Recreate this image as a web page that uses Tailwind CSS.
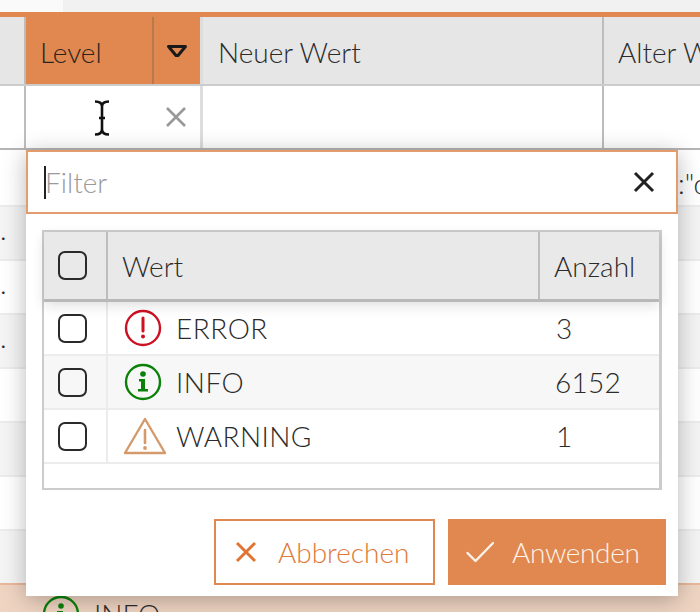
<!DOCTYPE html>
<html lang="de">
<head>
    <meta charset="UTF-8">
    <title>Filter</title>
    <script src="https://cdn.jsdelivr.net/npm/@tailwindcss/browser@4"></script>
</head>
<body class="w-[700px] h-[612px] overflow-hidden relative bg-white font-['Lato','Liberation_Sans',sans-serif] font-light text-[#2b2b2b] text-[28px]">
    <!-- Top strip -->
    <div class="h-3 flex">
        <div class="w-[63px] bg-[#fafafa]"></div>
        <div class="flex-1 bg-[#f1f1f1]"></div>
    </div>
    <div class="h-[5px] bg-[#e0884f]"></div>

    <!-- Table header -->
    <div class="flex h-[69px] border-b-2 border-[#cccccc] bg-[#e6e6e6]">
        <div class="w-[26px] border-r-2 border-[#bdbdbd]"></div>
        <div class="w-[174px] flex bg-[#e0884f]">
            <div class="w-[128px] border-r-2 border-[#b8794f] pl-[14px] pt-[17px] leading-[36px] text-[#2a2420]">Level</div>
            <div class="flex-1 flex items-start justify-center pt-[27px]">
                <svg width="22" height="16" viewBox="0 0 22 16" fill="none"><path d="M2.5 2.5H19.5L12 11.5H10Z" stroke="#1a1a1a" stroke-width="3" stroke-linejoin="round"/></svg>
            </div>
        </div>
        <div class="w-[404px] border-l-[3px] border-r-2 border-l-[#dddddd] border-r-[#bdbdbd] pl-[15px] pt-[17px] leading-[36px]">Neuer Wert</div>
        <div class="flex-1 pl-[14px] pt-[17px] leading-[36px] whitespace-nowrap overflow-hidden">Alter Wert</div>
    </div>

    <!-- Filter row -->
    <div class="flex h-[64px] border-b-2 border-[#b5b5b5] bg-white">
        <div class="w-[26px] border-r-2 border-[#bdbdbd]"></div>
        <div class="w-[174px] relative flex items-center justify-end pr-[13px]">
            <svg width="22" height="22" viewBox="0 0 22 22" fill="none"><path d="M2 2L20 20M20 2L2 20" stroke="#999999" stroke-width="2.6"/></svg>
            <svg class="absolute left-[67px] top-[14px]" width="18" height="36" viewBox="0 0 18 36" fill="none"><path d="M2 1.5C6 1.5 9 3 9 6.5V29.5C9 33 6 34.5 2 34.5M16 1.5C12 1.5 9 3 9 6.5V29.5C9 33 12 34.5 16 34.5M6 18H12" stroke="#111111" stroke-width="2.6"/></svg>
        </div>
        <div class="w-[404px] border-l-[3px] border-r-2 border-l-[#dddddd] border-r-[#bdbdbd]"></div>
        <div class="flex-1"></div>
    </div>

    <!-- Rows behind the popup -->
    <div class="h-[57px] bg-white border-b-2 border-[#ececec] flex justify-end">
        <span class="pt-[15px] leading-[36px] whitespace-nowrap w-[22px] overflow-hidden">:"d</span>
    </div>
    <div class="h-[54px] bg-[#f4f4f4] border-b-2 border-[#ececec] leading-[44px]">.</div>
    <div class="h-[54px] bg-white border-b-2 border-[#ececec] leading-[44px]">.</div>
    <div class="h-[54px] bg-[#f4f4f4] border-b-2 border-[#ececec] leading-[44px]">.</div>
    <div class="h-[54px] bg-white border-b-2 border-[#ececec]"></div>
    <div class="h-[54px] bg-[#f4f4f4] border-b-2 border-[#ececec]"></div>
    <div class="h-[54px] bg-white border-b-2 border-[#ececec]"></div>
    <div class="h-[54px] bg-[#f4f4f4] border-b-2 border-[#e8b89a]"></div>
    <div class="h-[27px] bg-[#efd4c2] pl-[42px] pt-[10px] flex gap-[14px] items-start">
        <svg class="shrink-0" width="38" height="38" viewBox="0 0 38 38" fill="none"><circle cx="19" cy="19" r="17" stroke="#0a820a" stroke-width="2.4"/><circle cx="19" cy="11" r="2.8" fill="#0a820a"/><path d="M15 16H21V27H24V29H14V27H17V18H15Z" fill="#0a820a"/></svg>
        <span class="leading-[36px] pt-[1px]">INFO</span>
    </div>

    <!-- Filter popup -->
    <div class="absolute left-[26px] top-[150px] w-[652px] h-[446px] bg-white shadow-[0_4px_22px_rgba(0,0,0,0.28)] flex flex-col">
        <div class="h-[64px] border-2 border-[#e29c6e] flex items-center pl-[16px] pr-[21px]">
            <div class="w-[2px] h-[33px] bg-[#222222]"></div>
            <span class="flex-1 text-[#9a9a9a] -ml-px">Filter</span>
            <svg width="22" height="22" viewBox="0 0 22 22" fill="none"><path d="M2 2L20 20M20 2L2 20" stroke="#222222" stroke-width="3"/></svg>
        </div>

        <div class="mx-[16px] mt-[16px] h-[260px] border-2 border-[#cccccc] border-r-[3px]">
            <div class="flex h-[70px] bg-[#e9e9e9] border-b-[3px] border-[#b8b8b8] shadow-[0_4px_12px_rgba(0,0,0,0.12)] relative">
                <div class="w-[64px] border-r-2 border-[#bdbdbd] flex items-center justify-center pr-[6px]">
                    <div class="w-[29px] h-[29px] rounded-[7px] border-[2.5px] border-[#2a2a2a]"></div>
                </div>
                <div class="flex-1 pl-[14px] pt-[16px] leading-[36px]">Wert</div>
                <div class="w-[121px] border-l-2 border-[#bdbdbd] pl-[14px] pt-[16px] leading-[36px]">Anzahl</div>
            </div>

            <div class="flex h-[54px] border-b-2 border-[#ececec]">
                <div class="w-[64px] border-r-2 border-[#ececec] flex items-center justify-center pr-[6px]">
                    <div class="w-[29px] h-[29px] rounded-[7px] border-[2.5px] border-[#2a2a2a]"></div>
                </div>
                <div class="flex-1 flex items-center pl-[16px] gap-[14px]">
                    <svg width="38" height="38" viewBox="0 0 38 38" fill="none"><circle cx="19" cy="19" r="17" stroke="#cc1122" stroke-width="2.4"/><path d="M19 9V22" stroke="#cc1122" stroke-width="3" stroke-linecap="round"/><circle cx="19" cy="27.5" r="2" fill="#cc1122"/></svg>
                    <span class="tracking-[0.5px]">ERROR</span>
                </div>
                <div class="w-[121px] flex items-center pl-[18px]">3</div>
            </div>
            <div class="flex h-[54px] border-b-2 border-[#ececec] bg-[#f7f7f7]">
                <div class="w-[64px] border-r-2 border-[#ececec] flex items-center justify-center pr-[6px]">
                    <div class="w-[29px] h-[29px] rounded-[7px] border-[2.5px] border-[#2a2a2a]"></div>
                </div>
                <div class="flex-1 flex items-center pl-[16px] gap-[14px]">
                    <svg width="38" height="38" viewBox="0 0 38 38" fill="none"><circle cx="19" cy="19" r="17" stroke="#0a820a" stroke-width="2.4"/><circle cx="19" cy="11" r="2.8" fill="#0a820a"/><path d="M15 16H21V26H24V28.5H14V26H17V18.5H15Z" fill="#0a820a"/></svg>
                    <span class="tracking-[0.5px]">INFO</span>
                </div>
                <div class="w-[121px] flex items-center pl-[17px] tracking-[0.3px]">6152</div>
            </div>
            <div class="flex h-[54px] border-b-2 border-[#ececec]">
                <div class="w-[64px] border-r-2 border-[#ececec] flex items-center justify-center pr-[6px]">
                    <div class="w-[29px] h-[29px] rounded-[7px] border-[2.5px] border-[#2a2a2a]"></div>
                </div>
                <div class="flex-1 flex items-center pl-[15px] gap-[9px]">
                    <svg width="44" height="40" viewBox="0 0 44 40" fill="none"><path d="M22 3L42 37H2Z" stroke="#d49a6c" stroke-width="2.4" stroke-linejoin="round"/><path d="M22 14V27" stroke="#d49a6c" stroke-width="2.6" stroke-linecap="round"/><circle cx="22" cy="32" r="1.9" fill="#d49a6c"/></svg>
                    <span class="tracking-[0.4px]">WARNING</span>
                </div>
                <div class="w-[121px] flex items-center pl-[18px]">1</div>
            </div>
        </div>

        <div class="flex justify-end gap-[13px] pr-[12px] mt-[29px]">
            <div class="w-[221px] h-[66px] border-2 border-[#e0884f] flex items-center pl-[19px] gap-[21px] text-[#e0793c]">
                <svg width="22" height="22" viewBox="0 0 22 22" fill="none"><path d="M2 2L20 20M20 2L2 20" stroke="#df7434" stroke-width="3"/></svg>
                <span>Abbrechen</span>
            </div>
            <div class="w-[218px] h-[66px] bg-[#e0884f] flex items-center pl-[18px] gap-[18px] text-[#fff3ea]">
                <svg width="28" height="22" viewBox="0 0 28 22" fill="none"><path d="M1.5 12L9.5 20L27 2" stroke="#fff3ea" stroke-width="2.4" stroke-linecap="round" stroke-linejoin="round"/></svg>
                <span class="tracking-[-0.35px]">Anwenden</span>
            </div>
        </div>
    </div>
</body>
</html>
